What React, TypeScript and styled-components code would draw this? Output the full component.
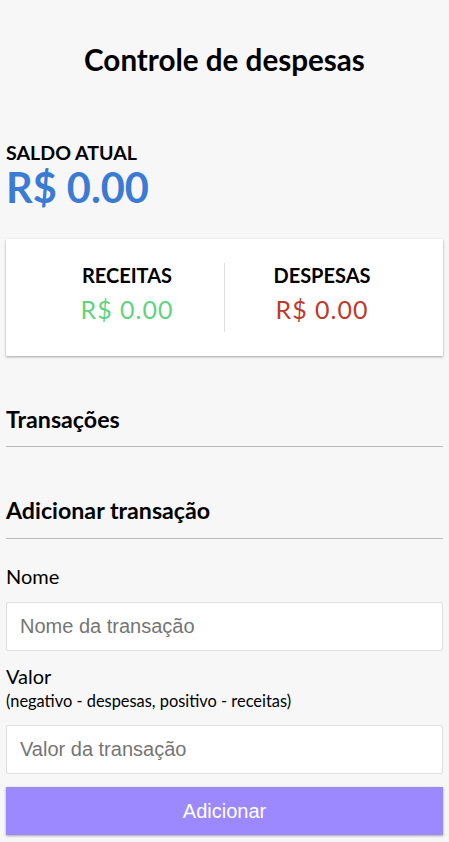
import React from "react";
import styled, { createGlobalStyle } from "styled-components";

const GlobalStyle = createGlobalStyle`
  * { box-sizing: border-box; }
  html, body { margin: 0; padding: 0; }
  body {
    background-color: #f7f7f7;
    font-family: Lato, "Open Sans", sans-serif;
    color: #000;
  }
`;

const Container = styled.div`
  padding: 0 6px 7px;
  display: flex;
  flex-direction: column;
`;

const Title = styled.h1`
  font-size: 29.6px;
  line-height: 1.2;
  font-weight: 700;
  text-align: center;
  margin: 41.5px 0 0;
`;

const BalanceLabel = styled.h4`
  font-size: 19.6px;
  line-height: 24px;
  font-weight: 700;
  text-transform: uppercase;
  margin: 63.5px 0 0;
`;

const Balance = styled.div`
  font-size: 41.5px;
  line-height: 42px;
  font-weight: 700;
  color: #3a7bd5;
  margin: 1.6px 0 0;
`;

const Card = styled.div`
  background: #fff;
  box-shadow: 0 1px 3px rgba(0, 0, 0, 0.12), 0 1px 2px rgba(0, 0, 0, 0.24);
  padding: 24px;
  display: flex;
  margin-top: 30.7px;
`;

const Column = styled.div<{ $divider?: boolean }>`
  flex: 1;
  text-align: center;
  border-right: ${(p) => (p.$divider ? "1px solid #dedede" : "none")};
`;

const ColumnLabel = styled.h4`
  font-size: 20px;
  line-height: 24px;
  font-weight: 700;
  text-transform: uppercase;
  margin: 0;
`;

const Money = styled.p<{ $kind: "plus" | "minus" }>`
  font-size: 25px;
  line-height: 30px;
  letter-spacing: 1px;
  margin: 7px 0 8px;
  color: ${(p) => (p.$kind === "plus" ? "#5fd47f" : "#c0392b")};
`;

const SectionTitle = styled.h3`
  font-size: 23.2px;
  line-height: 1.2;
  font-weight: 700;
  border-bottom: 1px solid #bbb;
  padding-bottom: 12.7px;
  margin: 50px 0 0;
`;

const Form = styled.form`
  display: flex;
  flex-direction: column;
`;

const FieldLabel = styled.label<{ $top: number; $bottom: number }>`
  display: block;
  font-size: 20px;
  line-height: 24px;
  margin: ${(p) => `${p.$top}px 0 ${p.$bottom}px`};
`;

const SmallNote = styled.small`
  display: block;
  font-size: 16.4px;
  line-height: 19px;
  margin: 3px 0 15px;
`;

const Input = styled.input`
  display: block;
  width: 100%;
  height: 49px;
  border: 1px solid #dedede;
  border-radius: 2px;
  background: #fff;
  padding: 0 13px;
  font-family: "Liberation Sans", Arial, sans-serif;
  font-size: 20px;
  color: #333;
  outline: none;
  &::placeholder {
    color: #757575;
  }
`;

const Button = styled.button`
  display: block;
  width: 100%;
  height: 48px;
  margin-top: 13px;
  border: 0;
  background-color: #9c88ff;
  color: #fff;
  font-family: "Liberation Sans", Arial, sans-serif;
  font-size: 20px;
  box-shadow: 0 1px 3px rgba(0, 0, 0, 0.12), 0 1px 2px rgba(0, 0, 0, 0.24);
  cursor: pointer;
`;

export default function App() {
  return (
    <>
      <GlobalStyle />
      <Container>
        <Title>Controle de despesas</Title>
        <BalanceLabel>Saldo atual</BalanceLabel>
        <Balance>R$ 0.00</Balance>
        <Card>
          <Column $divider>
            <ColumnLabel>Receitas</ColumnLabel>
            <Money $kind="plus">R$ 0.00</Money>
          </Column>
          <Column>
            <ColumnLabel>Despesas</ColumnLabel>
            <Money $kind="minus">R$ 0.00</Money>
          </Column>
        </Card>
        <SectionTitle>Transações</SectionTitle>
        <SectionTitle>Adicionar transação</SectionTitle>
        <Form onSubmit={(e) => e.preventDefault()}>
          <FieldLabel htmlFor="text" $top={25.3} $bottom={14}>
            Nome
          </FieldLabel>
          <Input id="text" type="text" placeholder="Nome da transação" />
          <FieldLabel htmlFor="amount" $top={13} $bottom={0}>
            Valor
          </FieldLabel>
          <SmallNote>(negativo - despesas, positivo - receitas)</SmallNote>
          <Input id="amount" type="number" placeholder="Valor da transação" />
          <Button type="submit">Adicionar</Button>
        </Form>
      </Container>
    </>
  );
}
